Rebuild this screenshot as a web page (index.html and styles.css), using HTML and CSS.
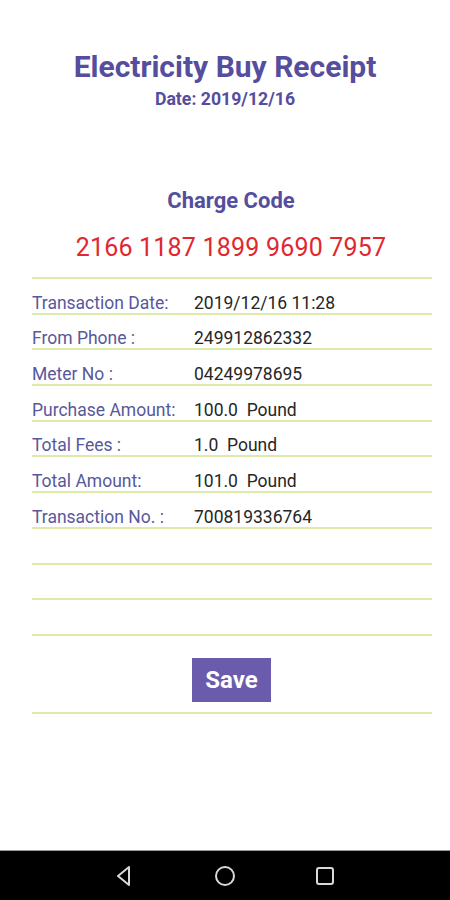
FILE: index.html
```html
<!DOCTYPE html>
<html lang="en">
<head>
    <meta charset="UTF-8">
    <meta name="viewport" content="width=device-width, initial-scale=1.0">
    <title>Electricity Buy Receipt</title>
    <link rel="stylesheet" href="styles.css">
</head>
<body>
    <main class="screen">
        <header class="head">
            <h1>Electricity Buy Receipt</h1>
            <p class="date">Date: 2019/12/16</p>
        </header>

        <section class="charge">
            <h2>Charge Code</h2>
            <p class="code">2166 1187 1899 9690 7957</p>
        </section>

        <section class="details">
            <div class="row"><span class="label">Transaction Date:</span><span class="value">2019/12/16 11:28</span></div>
            <div class="row"><span class="label">From Phone :</span><span class="value">249912862332</span></div>
            <div class="row"><span class="label">Meter No :</span><span class="value">04249978695</span></div>
            <div class="row"><span class="label">Purchase Amount:</span><span class="value">100.0&nbsp; Pound</span></div>
            <div class="row"><span class="label">Total Fees :</span><span class="value">1.0&nbsp; Pound</span></div>
            <div class="row"><span class="label">Total Amount:</span><span class="value">101.0&nbsp; Pound</span></div>
            <div class="row"><span class="label">Transaction No. :</span><span class="value">700819336764</span></div>
            <div class="row"></div>
            <div class="row"></div>
            <div class="row"></div>
            <div class="actions">
                <button type="button" class="save">Save</button>
            </div>
        </section>
    </main>

    <nav class="navbar">
        <svg width="22" height="22" viewBox="0 0 22 22" fill="none" stroke="#d8d8d8" stroke-width="2" stroke-linejoin="round">
            <path d="M15 2 L15 20 L4 11 Z"/>
        </svg>
        <svg width="22" height="22" viewBox="0 0 22 22" fill="none" stroke="#d8d8d8" stroke-width="2">
            <circle cx="11" cy="11" r="9"/>
        </svg>
        <svg width="22" height="22" viewBox="0 0 22 22" fill="none" stroke="#d8d8d8" stroke-width="2">
            <rect x="3" y="3" width="16" height="16" rx="2"/>
        </svg>
    </nav>
</body>
</html>
```

FILE: styles.css
```css
body {
    margin: 0;
    font-family: Roboto, "Liberation Sans", sans-serif;
    background-color: #fff;
    width: 450px;
    height: 900px;
    display: flex;
    flex-direction: column;
    overflow: hidden;
}

.screen {
    flex: 1;
}

.head {
    text-align: center;
    padding-top: 48px;
}

.head h1 {
    margin: 0;
    font-size: 30px;
    font-weight: bold;
    color: #554d9d;
    line-height: 38px;
}

.date {
    margin: 0;
    padding-top: 2px;
    font-size: 17.7px;
    font-weight: bold;
    color: #554d9d;
    line-height: 22px;
}

.charge {
    text-align: center;
    padding: 77px 0 0 12px;
}

.charge h2 {
    margin: 0;
    font-size: 22px;
    font-weight: bold;
    color: #554d9d;
    line-height: 28px;
}

.code {
    margin: 0;
    padding-top: 18px;
    font-size: 25px;
    color: #e0282f;
    line-height: 30px;
    letter-spacing: 0.2px;
}

.details {
    margin: 14px 18px 0 32px;
    border-top: 2px solid #dcebaa;
}

.row {
    display: flex;
    height: 33.7px;
    border-bottom: 2px solid #dcebaa;
    align-items: flex-end;
    font-size: 17.5px;
    line-height: 20px;
}

.label {
    width: 162px;
    color: #58589c;
}

.value {
    color: #262626;
}

.actions {
    display: flex;
    justify-content: center;
    padding: 22px 0 10px;
    border-bottom: 2px solid #dcebaa;
}

.save {
    width: 79px;
    height: 44px;
    margin-left: -1px;
    background-color: #6a5bad;
    color: #fff;
    border: none;
    font-family: Roboto, "Liberation Sans", sans-serif;
    font-size: 24px;
    font-weight: bold;
    padding: 0;
}

.navbar {
    height: 49px;
    background-color: #000;
    border-top: 1px solid #9a9a9a;
    display: flex;
    justify-content: center;
    align-items: center;
    gap: 78px;
}
```
